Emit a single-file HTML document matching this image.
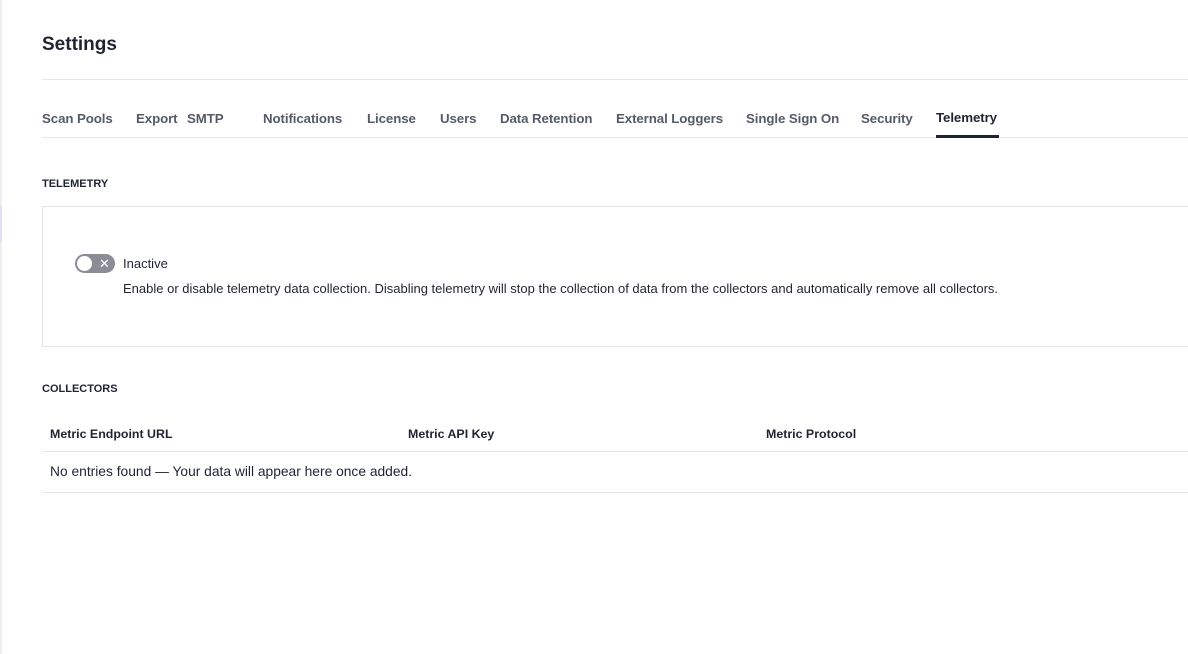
<!DOCTYPE html>
<html><head><style>
body{margin:0;width:1188px;height:654px;background:#fff;font-family:"Liberation Sans",sans-serif;color:#1f2430;position:relative;overflow:hidden}
.a{position:absolute;white-space:nowrap}
.tab{position:absolute;top:111px;font-size:13.3px;color:#555b68;font-weight:bold;letter-spacing:-0.1px}
.hl{position:absolute;left:42px;right:0;height:1px;background:#e6e7ea}
</style></head><body>
<div class="a" style="left:0;top:0;width:2px;height:654px;background:#eceef2"></div>
<div class="a" style="left:0;top:206px;width:2px;height:36px;background:#dfe2f0"></div>
<div class="a" style="left:42px;top:34px;font-size:19px;font-weight:bold;color:#1f2430">Settings</div>
<div class="hl" style="top:79px"></div>
<div class="tab" style="left:42px">Scan Pools</div>
<div class="tab" style="left:136px">Export</div>
<div class="tab" style="left:187px">SMTP</div>
<div class="tab" style="left:263px">Notifications</div>
<div class="tab" style="left:367px">License</div>
<div class="tab" style="left:440px">Users</div>
<div class="tab" style="left:500px">Data Retention</div>
<div class="tab" style="left:616px">External Loggers</div>
<div class="tab" style="left:746px">Single Sign On</div>
<div class="tab" style="left:861px">Security</div>
<div class="tab" style="left:936px;top:110px;color:#1f2430">Telemetry</div>
<div class="hl" style="top:137px"></div>
<div class="a" style="left:936px;top:135px;width:63px;height:3px;background:#1f2430"></div>
<div class="a" style="left:42px;top:178px;font-size:11px;font-weight:bold">TELEMETRY</div>
<div class="a" style="left:42px;top:206px;width:1150px;height:139px;border:1px solid #e3e4e8"></div>
<div class="a" style="left:75px;top:254px;width:40px;height:19px;border-radius:10px;background:#8a8d94"></div>
<div class="a" style="left:77px;top:256px;width:15px;height:15px;border-radius:50%;background:#fff"></div>
<div class="a" style="left:99px;top:254px;font-size:13px;color:#fff;line-height:19px">✕</div>
<div class="a" style="left:123px;top:256px;font-size:13px">Inactive</div>
<div class="a" style="left:123px;top:281px;font-size:13px">Enable or disable telemetry data collection. Disabling telemetry will stop the collection of data from the collectors and automatically remove all collectors.</div>
<div class="a" style="left:42px;top:383px;font-size:11px;font-weight:bold">COLLECTORS</div>
<div class="a" style="left:50px;top:427px;font-size:12.4px;font-weight:bold">Metric Endpoint URL</div>
<div class="a" style="left:408px;top:427px;font-size:12.4px;font-weight:bold">Metric API Key</div>
<div class="a" style="left:766px;top:427px;font-size:12.4px;font-weight:bold">Metric Protocol</div>
<div class="hl" style="top:451px"></div>
<div class="a" style="left:50px;top:464px;font-size:13.8px">No entries found — Your data will appear here once added.</div>
<div class="hl" style="top:492px"></div>
</body></html>
